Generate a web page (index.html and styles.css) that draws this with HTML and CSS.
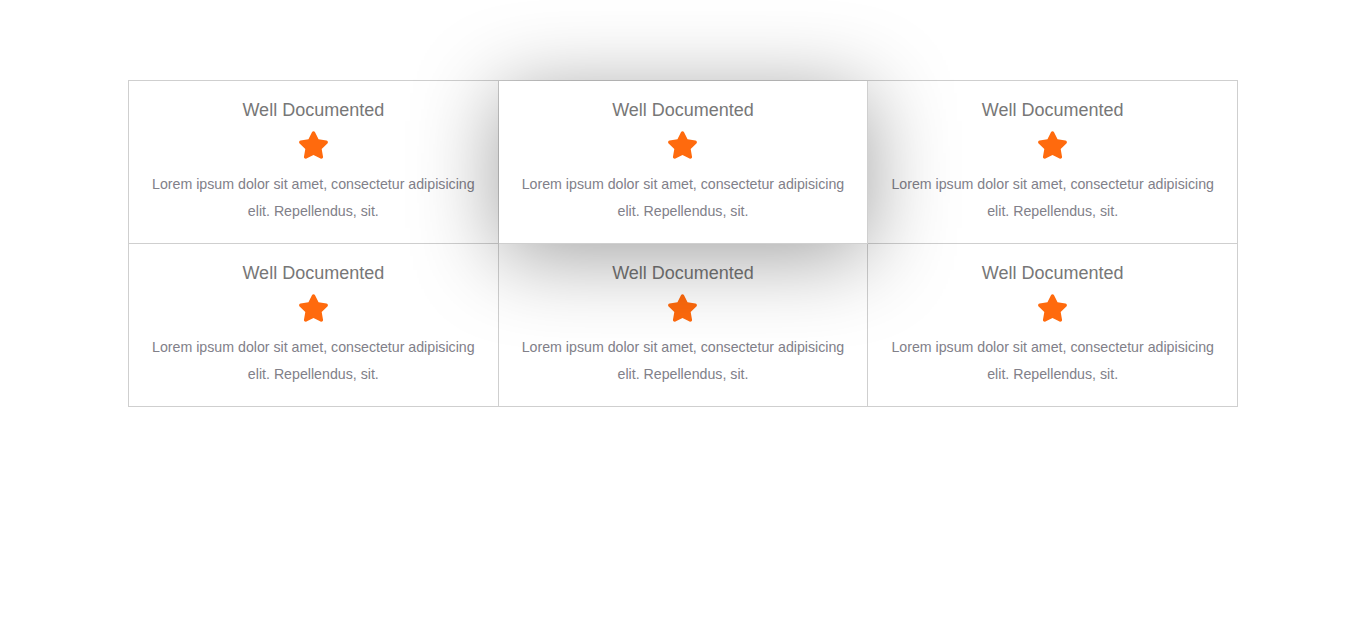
FILE: index.html
```html
<!DOCTYPE html>
<html lang="en">
<head>
<meta charset="utf-8">
<title>Features</title>
<link rel="stylesheet" href="styles.css">
</head>
<body>
<section class="features">
  <div class="feature">
    <h3 class="feature-title">Well Documented</h3>
    <svg class="star" viewBox="0 0 576 512" aria-hidden="true"><path d="M259.3 17.8L194 150.2 47.9 171.5c-26.2 3.8-36.7 36.1-17.7 54.6l105.7 103-25 145.5c-4.5 26.3 23.2 46 46.4 33.7L288 439.6l130.7 68.7c23.2 12.2 50.9-7.4 46.4-33.7l-25-145.5 105.7-103c19-18.5 8.5-50.8-17.7-54.6L382 150.2 316.7 17.8c-11.7-23.6-45.6-23.9-57.4 0z"/></svg>
    <p class="feature-text">Lorem ipsum dolor sit amet, consectetur adipisicing elit. Repellendus, sit.</p>
  </div>
  <div class="feature is-active">
    <h3 class="feature-title">Well Documented</h3>
    <svg class="star" viewBox="0 0 576 512" aria-hidden="true"><path d="M259.3 17.8L194 150.2 47.9 171.5c-26.2 3.8-36.7 36.1-17.7 54.6l105.7 103-25 145.5c-4.5 26.3 23.2 46 46.4 33.7L288 439.6l130.7 68.7c23.2 12.2 50.9-7.4 46.4-33.7l-25-145.5 105.7-103c19-18.5 8.5-50.8-17.7-54.6L382 150.2 316.7 17.8c-11.7-23.6-45.6-23.9-57.4 0z"/></svg>
    <p class="feature-text">Lorem ipsum dolor sit amet, consectetur adipisicing elit. Repellendus, sit.</p>
  </div>
  <div class="feature">
    <h3 class="feature-title">Well Documented</h3>
    <svg class="star" viewBox="0 0 576 512" aria-hidden="true"><path d="M259.3 17.8L194 150.2 47.9 171.5c-26.2 3.8-36.7 36.1-17.7 54.6l105.7 103-25 145.5c-4.5 26.3 23.2 46 46.4 33.7L288 439.6l130.7 68.7c23.2 12.2 50.9-7.4 46.4-33.7l-25-145.5 105.7-103c19-18.5 8.5-50.8-17.7-54.6L382 150.2 316.7 17.8c-11.7-23.6-45.6-23.9-57.4 0z"/></svg>
    <p class="feature-text">Lorem ipsum dolor sit amet, consectetur adipisicing elit. Repellendus, sit.</p>
  </div>
  <div class="feature">
    <h3 class="feature-title">Well Documented</h3>
    <svg class="star" viewBox="0 0 576 512" aria-hidden="true"><path d="M259.3 17.8L194 150.2 47.9 171.5c-26.2 3.8-36.7 36.1-17.7 54.6l105.7 103-25 145.5c-4.5 26.3 23.2 46 46.4 33.7L288 439.6l130.7 68.7c23.2 12.2 50.9-7.4 46.4-33.7l-25-145.5 105.7-103c19-18.5 8.5-50.8-17.7-54.6L382 150.2 316.7 17.8c-11.7-23.6-45.6-23.9-57.4 0z"/></svg>
    <p class="feature-text">Lorem ipsum dolor sit amet, consectetur adipisicing elit. Repellendus, sit.</p>
  </div>
  <div class="feature">
    <h3 class="feature-title">Well Documented</h3>
    <svg class="star" viewBox="0 0 576 512" aria-hidden="true"><path d="M259.3 17.8L194 150.2 47.9 171.5c-26.2 3.8-36.7 36.1-17.7 54.6l105.7 103-25 145.5c-4.5 26.3 23.2 46 46.4 33.7L288 439.6l130.7 68.7c23.2 12.2 50.9-7.4 46.4-33.7l-25-145.5 105.7-103c19-18.5 8.5-50.8-17.7-54.6L382 150.2 316.7 17.8c-11.7-23.6-45.6-23.9-57.4 0z"/></svg>
    <p class="feature-text">Lorem ipsum dolor sit amet, consectetur adipisicing elit. Repellendus, sit.</p>
  </div>
  <div class="feature">
    <h3 class="feature-title">Well Documented</h3>
    <svg class="star" viewBox="0 0 576 512" aria-hidden="true"><path d="M259.3 17.8L194 150.2 47.9 171.5c-26.2 3.8-36.7 36.1-17.7 54.6l105.7 103-25 145.5c-4.5 26.3 23.2 46 46.4 33.7L288 439.6l130.7 68.7c23.2 12.2 50.9-7.4 46.4-33.7l-25-145.5 105.7-103c19-18.5 8.5-50.8-17.7-54.6L382 150.2 316.7 17.8c-11.7-23.6-45.6-23.9-57.4 0z"/></svg>
    <p class="feature-text">Lorem ipsum dolor sit amet, consectetur adipisicing elit. Repellendus, sit.</p>
  </div>
</section>
</body>
</html>
```

FILE: styles.css
```css
* { box-sizing: border-box; }

html, body {
  margin: 0;
  background: #fff;
  font-family: "Liberation Sans", Arial, sans-serif;
}

.features {
  width: 1110px;
  margin: 80px auto 0;
  display: grid;
  grid-template-columns: repeat(3, 1fr);
  border-top: 1px solid #cfcfcf;
  border-left: 1px solid #cfcfcf;
}

.feature {
  border-right: 1px solid #cfcfcf;
  border-bottom: 1px solid #cfcfcf;
  height: 163px;
  padding: 17px 20px 0;
  text-align: center;
  display: flex;
  flex-direction: column;
  align-items: center;
}

.feature.is-active {
  position: relative;
  z-index: 1;
  background: #fff;
  box-shadow: 0 12px 85px rgba(0, 0, 0, 0.38);
}

.feature-title {
  margin: 0;
  font-size: 18px;
  font-weight: 400;
  line-height: 24px;
  color: #777;
}

.star {
  display: block;
  width: 31px;
  height: 28px;
  margin-top: 9px;
  fill: #ff6a0d;
}

.feature-text {
  margin: 12px 0 0;
  font-size: 14.2px;
  line-height: 27px;
  color: #818089;
}
```
